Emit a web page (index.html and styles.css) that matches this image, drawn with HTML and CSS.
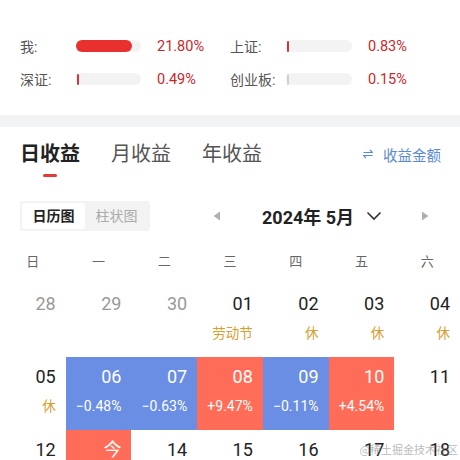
FILE: index.html
```html
<!DOCTYPE html>
<html lang="zh">
<head>
<meta charset="utf-8">
<link rel="stylesheet" href="styles.css">
</head>
<body>
<div class="page">
  <section class="stats">
    <div class="stat">
      <span class="label">我:</span>
      <span class="track"><span class="fill" style="width:56px"></span></span>
      <span class="pct">21.80%</span>
    </div>
    <div class="stat col2">
      <span class="label">上证:</span>
      <span class="track"><span class="tick red"></span></span>
      <span class="pct">0.83%</span>
    </div>
    <div class="stat">
      <span class="label">深证:</span>
      <span class="track"><span class="tick red"></span></span>
      <span class="pct">0.49%</span>
    </div>
    <div class="stat col2">
      <span class="label">创业板:</span>
      <span class="track"><span class="tick grey"></span></span>
      <span class="pct">0.15%</span>
    </div>
  </section>
  <div class="sep"></div>
  <section class="main">
    <div class="tabs">
      <div class="tab active">日收益<span class="ul"></span></div>
      <div class="tab">月收益</div>
      <div class="tab">年收益</div>
      <div class="switch">
        <svg width="10" height="10" viewBox="0 0 10 10" class="sw-ico"><path d="M0.5 3.5H9.5L7 1" fill="none" stroke="#5b8bd3" stroke-width="1.2"/><path d="M9.5 6.5H0.5L3 9" fill="none" stroke="#5b8bd3" stroke-width="1.2"/></svg>
        <span>收益金额</span>
      </div>
    </div>
    <div class="toolbar">
      <div class="seg">
        <span class="seg-btn on">日历图</span>
        <span class="seg-btn">柱状图</span>
      </div>
      <div class="monthnav">
        <svg class="tri" width="8" height="10" viewBox="0 0 8 10"><path d="M7 0.5V9.5L0.5 5Z" fill="#b0b0b0"/></svg>
        <span class="month">2024年 5月</span>
        <svg class="chev" width="16" height="10" viewBox="0 0 16 10"><path d="M1.5 1.5L8 8L14.5 1.5" fill="none" stroke="#333" stroke-width="1.6"/></svg>
        <svg class="tri right" width="8" height="10" viewBox="0 0 8 10"><path d="M1 0.5V9.5L7.5 5Z" fill="#b0b0b0"/></svg>
      </div>
    </div>
    <div class="weekdays">
      <span>日</span><span>一</span><span>二</span><span>三</span><span>四</span><span>五</span><span>六</span>
    </div>
    <div class="cal">
      <div class="cell other"><b>28</b></div>
      <div class="cell other"><b>29</b></div>
      <div class="cell other"><b>30</b></div>
      <div class="cell"><b>01</b><i class="hol">劳动节</i></div>
      <div class="cell"><b>02</b><i class="hol">休</i></div>
      <div class="cell"><b>03</b><i class="hol">休</i></div>
      <div class="cell"><b>04</b><i class="hol">休</i></div>

      <div class="cell"><b>05</b><i class="hol">休</i></div>
      <div class="cell down"><b>06</b><i>−0.48%</i></div>
      <div class="cell down"><b>07</b><i>−0.63%</i></div>
      <div class="cell up"><b>08</b><i>+9.47%</i></div>
      <div class="cell down"><b>09</b><i>−0.11%</i></div>
      <div class="cell up"><b>10</b><i>+4.54%</i></div>
      <div class="cell"><b>11</b></div>

      <div class="cell"><b>12</b></div>
      <div class="cell up"><b>今</b></div>
      <div class="cell"><b>14</b></div>
      <div class="cell"><b>15</b></div>
      <div class="cell"><b>16</b></div>
      <div class="cell"><b>17</b></div>
      <div class="cell"><b>18</b></div>
    </div>
  </section>
  <div class="watermark">@稀土掘金技术社区</div>
</div>
</body>
</html>
```

FILE: styles.css
```css
* { box-sizing: border-box; }
html, body { margin: 0; padding: 0; background: #fff; }
body {
  width: 460px;
  height: 460px;
  overflow: hidden;
  font-family: Roboto, "Noto Sans CJK SC", sans-serif;
  color: #222;
}
.page { position: relative; width: 460px; height: 460px; overflow: hidden; }

.stats {
  display: grid;
  grid-template-columns: 210px 230px;
  row-gap: 13px;
  padding: 36px 0 26px 20px;
}
.stat {
  display: flex;
  align-items: center;
  height: 20px;
  font-size: 14px;
}
.stat .label { width: 56px; color: #555; }
.stat .track {
  position: relative;
  display: block;
  width: 65px;
  height: 12px;
  border-radius: 6px;
  background: #f3f3f4;
}
.stat.col2 .track { width: 66px; }
.stat .fill {
  display: block;
  height: 12px;
  border-radius: 6px;
  background: #e8302e;
}
.stat .tick {
  display: block;
  width: 2px;
  height: 11px;
  margin-top: 0.5px;
  margin-left: 1px;
  border-radius: 1px;
}
.tick.red { background: #d2343a; }
.tick.grey { background: #cfcfcf; }
.stat .pct { margin-left: 16px; color: #c8282b; font-size: 14.5px; }

.sep { height: 12px; background: #f2f3f5; }

.tabs {
  display: flex;
  align-items: center;
  padding: 13px 19px 0 20px;
  height: 41px;
}
.tab {
  position: relative;
  font-size: 20px;
  line-height: 28px;
  color: #555;
  margin-right: 31px;
}
.tab.active { color: #222; font-weight: 700; }
.tab .ul {
  position: absolute;
  left: 23px;
  top: 34px;
  width: 14px;
  height: 3px;
  border-radius: 2px;
  background: #e53935;
}
.switch {
  margin-left: auto;
  display: flex;
  align-items: center;
  gap: 10px;
  color: #5b8bd3;
  font-size: 14.5px;
}

.toolbar {
  display: flex;
  align-items: center;
  padding: 33px 0 0 20px;
}
.seg {
  display: flex;
  width: 130px;
  height: 30px;
  padding: 2px;
  background: #f3f3f3;
  border-radius: 3px;
}
.seg-btn {
  width: 63px;
  height: 26px;
  line-height: 26px;
  text-align: center;
  font-size: 14px;
  color: #aaa;
}
.seg-btn.on { background: #fff; color: #222; font-weight: 700; border-radius: 2px; }

.monthnav {
  display: flex;
  align-items: center;
  margin-left: 63px;
}
.month {
  margin-left: 41px;
  font-size: 18px;
  font-weight: 700;
  color: #222;
}
.chev { margin-left: 12px; }
.tri.right { margin-left: 39px; }

.weekdays {
  display: grid;
  grid-template-columns: repeat(7, 1fr);
  padding-top: 21px;
  height: 53px;
  font-size: 13px;
  color: #666;
  line-height: 20px;
  text-align: center;
}

.cal {
  display: grid;
  grid-template-columns: repeat(7, 1fr);
  grid-auto-rows: 73px;
}
.cell {
  display: flex;
  flex-direction: column;
  align-items: flex-end;
  padding: 9px 10px 0 0;
}
.cell b {
  font-weight: 400;
  font-size: 18px;
  line-height: 22px;
  color: #222;
}
.cell i {
  font-style: normal;
  font-size: 14px;
  line-height: 18px;
  margin-top: 9px;
  color: #fff;
}
.cell i.hol { color: #d6a032; font-size: 13.5px; }
.cell.other b { color: #999; }
.cell.down { background: #6a8ee4; }
.cell.up { background: #ff6d58; }
.cell.down b, .cell.up b { color: #fff; }

.watermark {
  position: absolute;
  right: 2px;
  bottom: 3px;
  font-size: 11px;
  color: rgba(140, 140, 140, 0.6);
  font-family: "Noto Sans CJK SC", sans-serif;
}
```
